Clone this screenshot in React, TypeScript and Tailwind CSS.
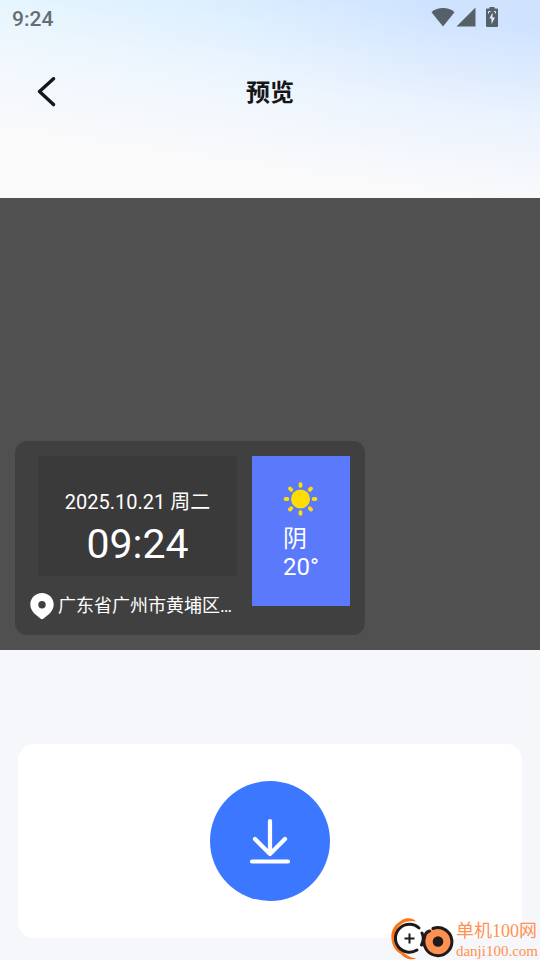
const watermark = {
  date: "2025.10.21 周二",
  time: "09:24",
  address: "广东省广州市黄埔区…",
  weather: "阴",
  temperature: "20°",
};

const rays = [0, 45, 90, 135, 180, 225, 270, 315];

function StatusBar() {
  return (
    <div className="flex h-[38px] items-center justify-between pl-3 pr-[42px] text-[#566069]">
      <span className="text-[21px] font-medium leading-9 text-[#666d72]">
        9:24
      </span>
      <div className="flex items-center pb-1">
        <svg className="h-5 w-6" viewBox="0 0 24 20" fill="currentColor">
          <path d="M12 19.5 23.5 5.2C20.4 2.4 16.3 1 12 1S3.6 2.4.5 5.2z" />
        </svg>
        <svg className="ml-px h-5 w-5" viewBox="0 0 20 20" fill="currentColor">
          <path d="M.5 19.5 19.5 .5v19z" />
        </svg>
        <svg className="ml-2.5 h-5 w-3" viewBox="0 0 12 20">
          <path
            fill="currentColor"
            d="M3.500 0h5v1.500H11a1 1 0 0 1 1 1V19a1 1 0 0 1-1 1H1a1 1 0 0 1-1-1V2.500a1 1 0 0 1 1-1h2.500z"
          />
          <path
            fill="none"
            stroke="#d4e8ff"
            strokeWidth="1"
            d="M2.500 6.500V4.500h2M8 4.500h1.500v2"
          />
          <path fill="#e4f1ff" d="M6.500 5.500 3.500 11.500h2v5.500L9 10.500H6.500z" />
        </svg>
      </div>
    </div>
  );
}

function Header() {
  return (
    <header className="h-[198px] bg-[linear-gradient(188deg,#fafafb00_10%,#f8fafdb3_46%,#fafafb_76%),linear-gradient(90deg,#dcf2fe_0%,#d6ecff_45%,#cfe3ff_80%)]">
      <StatusBar />
      <div className="grid h-[110px] grid-cols-3 items-center px-8">
        <button
          type="button"
          aria-label="返回"
          className="flex size-8 items-center justify-center text-[#151617]"
        >
          <svg
            className="size-8"
            viewBox="0 0 32 32"
            fill="none"
            stroke="currentColor"
            strokeWidth="3.4"
            strokeLinecap="round"
            strokeLinejoin="round"
          >
            <path d="M21.500 1.700 7.500 14.600l14 13" />
          </svg>
        </button>
        <h1 className="text-center text-2xl font-bold text-[#151617]">预览</h1>
      </div>
    </header>
  );
}

function SunIcon() {
  return (
    <svg className="size-9" viewBox="0 0 36 36" fill="#ffdd00">
      <circle cx="17.500" cy="18" r="9.500" />
      {rays.map((angle) => (
        <rect
          key={angle}
          x="15.600"
          y="1.300"
          width="3.800"
          height="5.400"
          rx="1.700"
          transform={`rotate(${angle} 17.500 18)`}
        />
      ))}
    </svg>
  );
}

function PinIcon() {
  return (
    <svg className="h-7 w-6 shrink-0" viewBox="0 0 24 28">
      <path
        fill="#fff"
        d="M12 1C5.500 1 .3 6 .3 12.400c0 4 2.200 7.400 5.200 10.200l4.900 4c.9.800 2.300.8 3.200 0l4.900-4c3-2.800 5.200-6.200 5.200-10.200C23.700 6 18.500 1 12 1z"
      />
      <circle cx="12" cy="12.700" r="3.700" fill="#404040" />
    </svg>
  );
}

function WatermarkCard() {
  return (
    <div className="flex w-[350px] items-start rounded-xl bg-[#404040] p-[15px] text-white">
      <div className="min-w-0 flex-1">
        <div className="ml-2 flex h-[120px] flex-col items-center justify-end bg-[#3a3a3a] pb-2">
          <p className="text-xl leading-7">{watermark.date}</p>
          <p className="pt-1 text-[41px] leading-[48px]">{watermark.time}</p>
        </div>
        <div className="flex items-center gap-1 pt-4">
          <PinIcon />
          <p className="whitespace-nowrap text-lg leading-7">
            {watermark.address}
          </p>
        </div>
      </div>
      <div className="ml-[15px] flex h-[150px] w-[98px] flex-col items-center justify-center bg-[#5b79fb]">
        <SunIcon />
        <div className="mt-2 text-2xl leading-7">
          <p>{watermark.weather}</p>
          <p>{watermark.temperature}</p>
        </div>
      </div>
    </div>
  );
}

function DownloadPanel() {
  return (
    <section className="mx-[18px] mt-[94px] flex justify-center rounded-2xl bg-white py-[37px]">
      <button
        type="button"
        aria-label="下载"
        className="flex size-[120px] items-center justify-center rounded-full bg-[#3c78ff]"
      >
        <svg
          className="size-12"
          viewBox="0 0 48 48"
          fill="none"
          stroke="#fff"
          strokeWidth="4.2"
          strokeLinecap="round"
          strokeLinejoin="round"
        >
          <path d="M24 4v33M9 22l15 15 15-15M6 44.500h36" />
        </svg>
      </button>
    </section>
  );
}

function SiteMark() {
  return (
    <div className="absolute bottom-0 right-0 flex items-center text-[#ff9150]">
      <svg className="h-[42px] w-16" viewBox="0 0 64 42" fill="none">
        <path
          fill="#ff7417"
          d="M26 3.500C23-.5 16-.8 12 2 4 7 .5 13 1.500 21c.7 7 4 12 9.500 15 3 4.500 11 7 15.500 4-5.500 0-9-2-13-5.500C7 31 4 26 4.500 19 5 12 9 7 14 4.500c4-1.500 8-1.500 12-1z"
        />
        <circle cx="19.500" cy="20.500" r="14.500" fill="#fff" />
        <path
          stroke="#211a1b"
          strokeWidth="3"
          strokeLinecap="round"
          d="M29 10A14 14 0 1 0 27 32"
        />
        <path stroke="#211a1b" strokeWidth="2" d="M19.500 15.500v10M14.500 20.500h10" />
        <circle cx="48" cy="23.500" r="14" fill="#ff9150" />
        <path
          stroke="#211a1b"
          strokeWidth="3"
          strokeLinecap="round"
          strokeLinejoin="round"
          d="M43 10.500A14 14 0 1 1 34.500 19.500C35 16 37.500 13.500 39.500 13M32 15c1.500 3 1.500 8-.5 12"
        />
        <circle cx="48" cy="23.500" r="5.300" fill="#211a1b" />
      </svg>
      <div className="pl-0.5 pr-0.5 font-['Liberation_Serif','Noto_Sans_CJK_SC',serif]">
        <p className="text-lg leading-6">单机100网</p>
        <p className="text-[15px] leading-4">danji100.com</p>
      </div>
    </div>
  );
}

export default function App() {
  return (
    <main className="relative min-h-screen bg-[#f6f7fa] font-[Roboto,'Noto_Sans_CJK_SC',sans-serif]">
      <Header />
      <section className="flex h-[452px] items-end bg-[#505050] p-[15px]">
        <WatermarkCard />
      </section>
      <DownloadPanel />
      <SiteMark />
    </main>
  );
}
